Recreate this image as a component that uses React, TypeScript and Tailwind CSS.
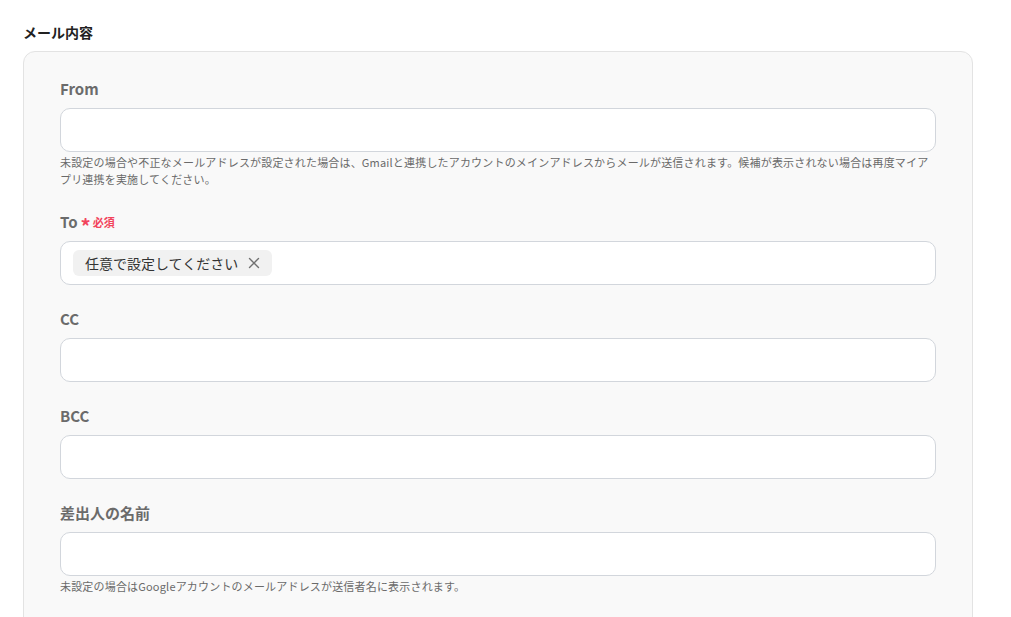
import React from "react";

const font = { fontFamily: '"Noto Sans CJK JP", "Noto Sans", sans-serif' };

function Label({ text, required }: { text: string; required?: boolean }) {
  return (
    <div className="flex h-[20px] items-center gap-[3px]">
      <span className="text-[15px] font-bold leading-[20px] text-[#6b6b6b]">{text}</span>
      {required && (
        <span className="flex items-center gap-[2px] text-[#f2445c]">
          <span className="mt-[8px] text-[20px] font-bold leading-[14px]">*</span>
          <span className="text-[11px] font-bold leading-[14px]">必須</span>
        </span>
      )}
    </div>
  );
}

function Field({
  label,
  required,
  help,
  children,
}: {
  label: string;
  required?: boolean;
  help?: string;
  children?: React.ReactNode;
}) {
  return (
    <div className="flex flex-col">
      <Label text={label} required={required} />
      <div className="mt-[9px] flex h-[44px] items-center rounded-[10px] border border-[#d2d6dc] bg-white px-[12px]">
        {children}
      </div>
      {help && (
        <p className="mt-[2px] text-[11px] leading-[17px] tracking-[0.18px] text-[#6a6a6a]">{help}</p>
      )}
    </div>
  );
}

export default function App() {
  return (
    <div className="min-h-screen bg-white pl-[23px] pr-[38px] pt-[22px]" style={font}>
      <h2 className="text-[14px] font-bold leading-[20px] text-[#222]">メール内容</h2>
      <div className="mt-[9px] flex flex-col gap-[24px] rounded-[12px] border border-[#e3e3e3] bg-[#f9f9f9] px-[36px] pb-[40px] pt-[27px]">
        <Field
          label="From"
          help="未設定の場合や不正なメールアドレスが設定された場合は、Gmailと連携したアカウントのメインアドレスからメールが送信されます。候補が表示されない場合は再度マイアプリ連携を実施してください。"
        />
        <Field label="To" required>
          <span className="flex h-[26px] items-center gap-[10px] rounded-[6px] bg-[#f1f1f1] pl-[12px] pr-[12px] text-[14px] text-[#333]">
            任意で設定してください
            <svg width="12" height="12" viewBox="0 0 12 12" fill="none" stroke="#707070" strokeWidth="1.4" strokeLinecap="round">
              <path d="M1.5 1.5 L10.5 10.5 M10.5 1.5 L1.5 10.5" />
            </svg>
          </span>
        </Field>
        <Field label="CC" />
        <Field label="BCC" />
        <Field
          label="差出人の名前"
          help="未設定の場合はGoogleアカウントのメールアドレスが送信者名に表示されます。"
        />
      </div>
    </div>
  );
}
